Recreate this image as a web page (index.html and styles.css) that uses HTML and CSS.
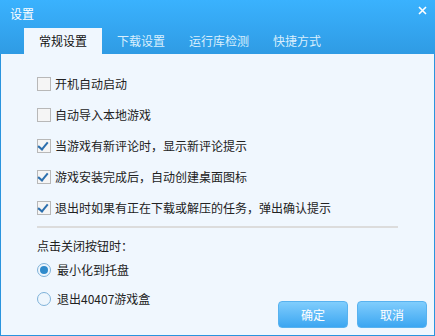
FILE: index.html
```html
<!DOCTYPE html>
<html lang="zh-CN">
<head>
    <meta charset="UTF-8">
    <title>设置</title>
    <link rel="stylesheet" href="styles.css">
</head>
<body>
    <div class="window">
        <div class="header">
            <div class="titlebar">
                <span class="title">设置</span>
                <span class="close">
                    <svg width="9" height="9" viewBox="0 0 9 9"><path d="M1 1L8 8M8 1L1 8" stroke="#fff" stroke-width="1.6" fill="none"/></svg>
                </span>
            </div>
            <div class="tabs">
                <div class="tab active">常规设置</div>
                <div class="tab">下载设置</div>
                <div class="tab">运行库检测</div>
                <div class="tab">快捷方式</div>
            </div>
        </div>
        <div class="content">
            <div class="options">
                <label class="row"><span class="checkbox"></span>开机自动启动</label>
                <label class="row"><span class="checkbox"></span>自动导入本地游戏</label>
                <label class="row"><span class="checkbox checked"></span>当游戏有新评论时，显示新评论提示</label>
                <label class="row"><span class="checkbox checked"></span>游戏安装完成后，自动创建桌面图标</label>
                <label class="row"><span class="checkbox checked"></span>退出时如果有正在下载或解压的任务，弹出确认提示</label>
                <div class="divider"></div>
            </div>
            <div class="lower">
                <div class="close-opts">
                    <div class="label">点击关闭按钮时：</div>
                    <label class="radio-row"><span class="radio selected"></span>最小化到托盘</label>
                    <label class="radio-row"><span class="radio"></span>退出40407游戏盒</label>
                </div>
                <div class="buttons">
                    <button class="btn">确定</button>
                    <button class="btn">取消</button>
                </div>
            </div>
        </div>
    </div>
</body>
</html>
```

FILE: styles.css
```css
body, html {
    margin: 0;
    padding: 0;
    font-family: "Noto Sans CJK SC", "Liberation Sans", sans-serif;
    font-size: 12px;
    color: #222;
}
.window {
    width: 435px;
    height: 336px;
    display: flex;
    flex-direction: column;
}
.header {
    height: 54px;
    background: linear-gradient(to bottom, #3ab2fe, #2f9be4);
}
.titlebar {
    height: 28px;
    display: flex;
    align-items: center;
    justify-content: space-between;
    padding: 0 7px 0 10px;
    color: #fff;
}
.title {
    line-height: 16px;
    margin-top: -1px;
}
.close {
    display: flex;
    margin-top: -7px;
    margin-right: 1px;
}
.tabs {
    display: flex;
    height: 26px;
    padding-left: 24px;
}
.tab {
    width: 78px;
    text-align: center;
    line-height: 26px;
    color: #d9effd;
}
.tab.active {
    background-color: #f0f7fe;
    color: #111;
}
.content {
    flex: 1;
    display: flex;
    flex-direction: column;
    background-color: #f0f7fe;
    border: 1px solid #2a94de;
    border-top: none;
}
.options {
    padding: 14px 36px 0 36px;
}
.row, .radio-row {
    display: flex;
    align-items: center;
    height: 31px;
}
.checkbox {
    width: 12px;
    height: 12px;
    border: 1px solid #b8b8b8;
    background-color: #f5f5f5;
    margin-right: 4px;
    position: relative;
}
.checkbox.checked::after {
    content: "";
    position: absolute;
    left: 2px;
    top: 0px;
    width: 4px;
    height: 8px;
    border: solid #2c6fae;
    border-width: 0 2px 2px 0;
    transform: rotate(40deg);
}
.divider {
    height: 2px;
    background-color: #dcdcdc;
    margin-top: 3px;
}
.lower {
    flex: 1;
    display: flex;
    justify-content: space-between;
    align-items: flex-end;
    padding: 0 7px 7px 36px;
}
.close-opts {
    padding-bottom: 15px;
}
.label {
    margin-top: 8px;
    height: 19px;
    line-height: 19px;
}
.radio-row {
    height: 29px;
}
.radio {
    width: 12px;
    height: 12px;
    border: 1px solid #7fb2d9;
    border-radius: 50%;
    background-color: #eef6fd;
    margin-right: 6px;
    display: flex;
    align-items: center;
    justify-content: center;
}
.radio.selected::after {
    content: "";
    width: 8px;
    height: 8px;
    border-radius: 50%;
    background-color: #2f8acb;
}
.buttons {
    display: flex;
    gap: 9px;
}
.btn {
    width: 70px;
    height: 27px;
    border: 1px solid #58b2ef;
    border-radius: 4px;
    background: linear-gradient(to bottom, #80cdfd, #3ca6f1);
    color: #fff;
    font-family: inherit;
    font-size: 12px;
    padding: 0;
}
```
